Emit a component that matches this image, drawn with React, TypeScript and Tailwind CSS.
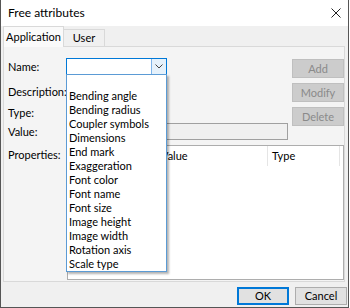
const names: string[] = [
  "",
  "Bending angle",
  "Bending radius",
  "Coupler symbols",
  "Dimensions",
  "End mark",
  "Exaggeration",
  "Font color",
  "Font name",
  "Font size",
  "Image height",
  "Image width",
  "Rotation axis",
  "Scale type",
];

const SideButton = ({ label }: { label: string }) => (
  <button className="h-[19px] w-[52px] bg-[#cccccc] border border-[#bfbfbf] text-[#8a8a8a] flex items-center justify-center">
    {label}
  </button>
);

const App = () => {
  return (
    <div className="relative w-[349px] h-[308px] overflow-hidden bg-[#f0f0f0] border-l border-r border-b border-[#555555] text-[11px] leading-[14px] text-black font-[Lato,sans-serif]">
      {/* title bar */}
      <div className="h-[26px] bg-white flex items-center justify-between pl-[7px] pr-[7px]">
        <span className="text-[12px]">Free attributes</span>
        <svg width="10" height="10" viewBox="0 0 10 10">
          <path d="M0.5 0.5 L9.5 9.5 M9.5 0.5 L0.5 9.5" stroke="#222" strokeWidth="1" />
        </svg>
      </div>

      {/* tabs */}
      <div className="h-[20px] flex items-end pl-[2px]">
        <div className="relative z-10 -mb-px h-[21px] w-[61px] bg-[#fafafa] border-l border-t border-r border-[#d9d9d9] flex items-center justify-center">
          Application
        </div>
        <div className="h-[17px] w-[41px] bg-[#f0f0f0] border-t border-r border-[#d9d9d9] flex items-center justify-center">
          User
        </div>
      </div>

      {/* tab page */}
      <div className="ml-[2px] w-[342px] h-[236px] border border-[#d9d9d9] bg-[#f4f4f4]">
        <div className="flex">
          <div className="flex-1 pt-[11px] pl-[4px]">
            <div className="flex items-center h-[17px]">
              <span className="w-[58px]">Name:</span>
              <div className="w-[101px] h-[17px] bg-white border border-[#0078d7] flex justify-end">
                <div className="w-[15px] h-full bg-[#e5f1fb] border-l border-[#7eb4ea] flex items-center justify-center">
                  <svg width="8" height="5" viewBox="0 0 8 5">
                    <path d="M0.5 0.5 L4 4 L7.5 0.5" stroke="#444" strokeWidth="1" fill="none" />
                  </svg>
                </div>
              </div>
            </div>
            <div className="flex items-center h-[17px] mt-[8px]">
              <span className="w-[58px]">Description:</span>
              <div className="w-[100px] h-[17px] bg-white border border-[#7a7a7a]" />
            </div>
            <div className="flex items-center h-[17px] mt-[4px]">
              <span className="w-[58px]">Type:</span>
              <div className="w-[100px] h-[17px] bg-white border border-[#7a7a7a]" />
            </div>
            <div className="flex items-center h-[17px] mt-[2px]">
              <span className="w-[58px]">Value:</span>
              <div className="w-[222px] h-[17px] bg-[#f0f0f0] border border-[#a0a0a0]" />
            </div>
          </div>
          <div className="w-[52px] pt-[12px] flex flex-col gap-[5px]">
            <SideButton label="Add" />
            <SideButton label="Modify" />
            <SideButton label="Delete" />
          </div>
        </div>

        <div className="flex mt-[5px] pl-[4px]">
          <span className="w-[59px] pt-[3px]">Properties:</span>
          <div className="w-[277px] h-[135px] bg-white border border-[#adadad]">
            <div className="h-[20px] flex items-center">
              <div className="w-[90px] h-full border-r border-[#e5e5e5]" />
              <div className="w-[110px] h-full pl-[3px] flex items-center border-r border-[#e5e5e5]">Value</div>
              <div className="w-[72px] h-full pl-[4px] flex items-center border-r border-[#e5e5e5]">Type</div>
            </div>
          </div>
        </div>
      </div>

      {/* dialog buttons */}
      <div className="flex justify-end gap-[6px] pr-[1px] mt-[5px]">
        <button className="h-[18px] w-[52px] bg-[#e1e1e1] border-2 border-[#0078d7] flex items-center justify-center">
          OK
        </button>
        <button className="h-[18px] w-[52px] bg-[#e1e1e1] border border-[#adadad] flex items-center justify-center">
          Cancel
        </button>
      </div>

      {/* open combo list */}
      <div className="absolute left-[65px] top-[74px] z-20 w-[101px] h-[198px] bg-white border border-[#5b9bd5] shadow-[2px_2px_2px_rgba(0,0,0,0.3)]">
        {names.map((n, i) => (
          <div key={i} className="h-[14px] pl-[2px] flex items-center whitespace-nowrap">
            {n}
          </div>
        ))}
      </div>
    </div>
  );
};

export default App;
